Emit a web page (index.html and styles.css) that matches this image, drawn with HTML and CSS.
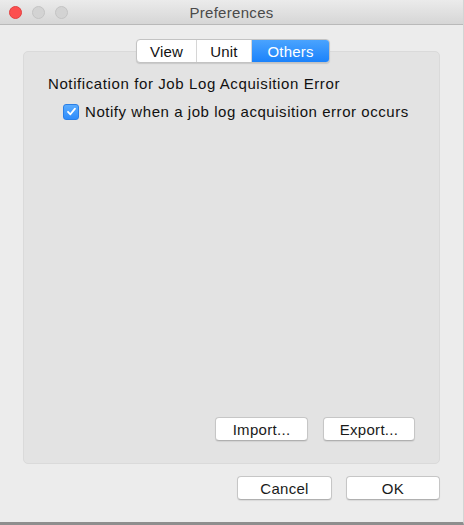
FILE: index.html
```html
<!DOCTYPE html>
<html>
<head>
<meta charset="utf-8">
<link rel="stylesheet" href="styles.css">
</head>
<body>
<div class="window">
  <div class="titlebar">
    <div class="lights">
      <span class="light red"></span>
      <span class="light"></span>
      <span class="light"></span>
    </div>
    <div class="title">Preferences</div>
  </div>
  <div class="content">
    <div class="tabs">
      <div class="tab t-view">View</div>
      <div class="tab t-unit">Unit</div>
      <div class="tab t-others active">Others</div>
    </div>
    <div class="group">
      <div class="heading">Notification for Job Log Acquisition Error</div>
      <label class="check">
        <span class="box">
          <svg width="11" height="11" viewBox="0 0 11 11"><path d="M2 5.8 L4.4 8.3 L9 2.6" fill="none" stroke="#fff" stroke-width="1.8" stroke-linecap="round" stroke-linejoin="round"/></svg>
        </span>
        <span>Notify when a job log acquisition error occurs</span>
      </label>
      <div class="spacer"></div>
      <div class="group-buttons">
        <button class="btn w-import">Import...</button>
        <button class="btn w-export">Export...</button>
      </div>
    </div>
    <div class="dialog-buttons">
      <button class="btn w-cancel">Cancel</button>
      <button class="btn w-ok">OK</button>
    </div>
  </div>
</div>
</body>
</html>
```

FILE: styles.css
```css
* { box-sizing: border-box; }
html, body {
  margin: 0;
  padding: 0;
  width: 464px;
  height: 525px;
  overflow: hidden;
  background: #ececec;
}
body {
  font-family: "Liberation Sans", Arial, sans-serif;
  font-size: 14px;
  color: #1a1a1a;
}
.window {
  width: 464px;
  height: 525px;
  display: flex;
  flex-direction: column;
  background: #ececec;
  border-bottom: 3px solid #8e8e8e;
  border-right: 1px solid #d4d4d4;
}
.titlebar {
  height: 25px;
  flex: none;
  display: flex;
  align-items: center;
  background: linear-gradient(#ebebeb, #d6d6d6);
  border-bottom: 1px solid #b9b9b9;
}
.lights {
  display: flex;
  gap: 10px;
  padding-left: 9px;
}
.light {
  width: 13px;
  height: 13px;
  border-radius: 50%;
  background: #d3d3d3;
  border: 1px solid #c4c4c4;
}
.light.red {
  background: #fc4f4f;
  border-color: #e24040;
}
.title {
  flex: 1;
  text-align: center;
  margin-right: 68px;
  font-size: 15px;
  letter-spacing: 0.3px;
  color: #4a4a4a;
}
.content {
  flex: 1;
  display: flex;
  flex-direction: column;
  padding: 14px 23px 22px 23px;
}
.tabs {
  align-self: flex-start;
  margin-left: 113px;
  display: flex;
  height: 24px;
  border: 1px solid #c3c3c3;
  border-radius: 4px;
  background: #fff;
  position: relative;
  z-index: 1;
  margin-bottom: -12px;
  box-shadow: 0 1px 1px rgba(0,0,0,0.12);
  overflow: hidden;
}
.tab {
  display: flex;
  align-items: center;
  justify-content: center;
  font-size: 15px;
  letter-spacing: 0.2px;
  color: #111;
  border-right: 1px solid #d6d6d6;
}
.tab:last-child { border-right: none; }
.t-view { width: 60px; }
.t-unit { width: 55px; }
.t-others { width: 77px; }
.tab.active {
  background: linear-gradient(#4aa3fe, #1b82fb);
  color: #fff;
}
.group {
  flex: 1;
  display: flex;
  flex-direction: column;
  background: #e3e3e3;
  border: 1px solid #dadada;
  border-radius: 5px;
  padding: 22px 24px 22px 24px;
}
.heading {
  font-size: 15px;
  letter-spacing: 0.6px;
  color: #111;
  line-height: 20px;
}
.check {
  display: flex;
  align-items: center;
  gap: 6px;
  margin-top: 9px;
  margin-left: 15px;
  font-size: 15px;
  letter-spacing: 0.55px;
  color: #111;
}
.box {
  width: 16px;
  height: 16px;
  border-radius: 3px;
  background: linear-gradient(#5aacff, #2e8cfb);
  border: 1px solid #2a7fe6;
  display: flex;
  align-items: center;
  justify-content: center;
}
.spacer { flex: 1; }
.group-buttons,
.dialog-buttons {
  display: flex;
  justify-content: flex-end;
  gap: 15px;
}
.dialog-buttons {
  margin-top: 12px;
  gap: 14px;
}
.btn {
  height: 24px;
  font-family: "Liberation Sans", Arial, sans-serif;
  font-size: 15px;
  letter-spacing: 0.3px;
  color: #1a1a1a;
  background: #fff;
  border: 1px solid #c6c6c6;
  border-bottom-color: #b0b0b0;
  border-radius: 4px;
  box-shadow: 0 1px 1px rgba(0,0,0,0.08);
  padding: 0;
}
.w-import { width: 93px; }
.w-export { width: 92px; }
.w-cancel { width: 95px; }
.w-ok { width: 94px; }
```
